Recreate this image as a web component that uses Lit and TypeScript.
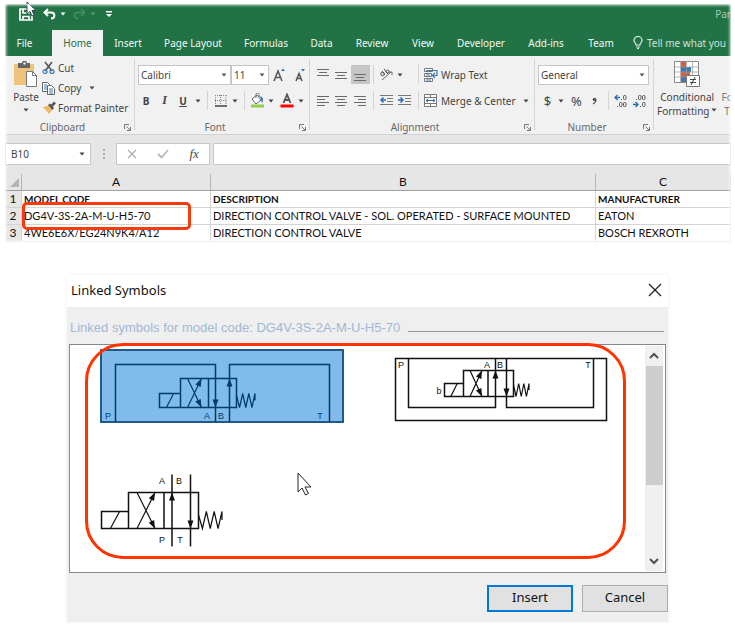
import { LitElement, html, svg, css } from "lit";
import { customElement } from "lit/decorators.js";

const caret = html`<svg class="caret" width="6" height="4" viewBox="0 0 6 4" aria-hidden="true"><path d="M0.5 0.5h5L3 3.5z" fill="currentColor"/></svg>`;

const lines = (rows: number[][], w = 13) => html`<svg width=${w} height="13" viewBox="0 0 ${w} 13" aria-hidden="true">
  ${rows.map(([x1, x2, y]) => svg`<path d="M${x1} ${y + 0.5}H${x2}" stroke="#6a6a6a"/>`)}
</svg>`;

@customElement("excel-window")
export class ExcelWindow extends LitElement {
  static styles = css`
    :host { display: block; position: relative; overflow: hidden; background: #f1f1f1; color: #444; font: 11px/14px "Noto Sans", "Open Sans", sans-serif; }
    :host::after { content: ""; position: absolute; inset: 0; box-shadow: inset 0 0 3px 1px #fff; pointer-events: none; z-index: 3; }
    button { font: inherit; color: inherit; background: none; border: 0; padding: 0; margin: 0; display: flex; align-items: center; justify-content: center; white-space: nowrap; height: 19px; }
    svg { display: block; flex: none; }
    .title { background: #217346; color: #fff; height: 26px; box-sizing: border-box; display: flex; align-items: center; padding: 0 0 6px 14px; gap: 4px; }
    .title button { color: #fff; }
    .title .save { margin-right: 6px; }
    .title .dim { color: #5c9a78; }
    .title .redo { margin: 0 6px 0 3px; gap: 4px; }
    .title .undo { gap: 4px; }
    .doc { margin-left: auto; color: #a6c7b5; font-size: 10px; }
    .tabs { background: #217346; display: grid; grid-template-columns: 47px 51px 50px 80px 66px 45px 56px 46px 70px 60px 50px 1fr; height: 26px; }
    .tabs button { height: 25px; color: #f3f8f5; font-size: 10px; }
    .tabs button:first-child { padding-right: 8px; }
    .tabs .active { height: 26px; background: #f1f1f1; color: #217346; }
    .tabs .tell { color: #cfe2d7; justify-content: flex-start; gap: 4px; padding-left: 7px; }
    .ribbon { display: grid; grid-template-columns: 130px 175px 225px 119px 1fr; height: 78px; border-bottom: 1px solid #d2d2d2; font-size: 10px; }
    .group { display: flex; flex-direction: column; min-width: 0; position: relative; padding: 9px 0 0 3px; gap: 7px; }
    .group::after { content: ""; position: absolute; right: 0; top: 3px; bottom: 4px; border-right: 1px solid #d4d4d4; }
    .foot { display: flex; align-items: center; justify-content: center; height: 14px; padding-right: 18px; color: #666; margin-top: auto; }
    .launch { position: absolute; right: 4px; bottom: 3px; height: 8px; }
    .row { display: grid; height: 19px; align-items: center; justify-items: center; }
    .clip { padding: 2px 0 0 5px; gap: 0; }
    .clipbody { display: grid; grid-template-columns: 32px 1fr; }
    .big { height: auto; flex-direction: column; justify-content: flex-start; line-height: 14px; }
    .big svg:first-child { margin-bottom: 2px; }
    .paste { padding-top: 3px; }
    .paste .caret { margin-top: 4px; }
    .stack { display: grid; grid-auto-rows: 20px; justify-items: start; align-items: center; }
    .stack button { gap: 2px; }
    .stack .caret { margin-left: 6px; }
    .clip .foot { padding-right: 20px; }
    .pick { position: relative; width: 100%; height: 20px; display: block; }
    .pick select { appearance: none; box-sizing: border-box; font: inherit; color: #444; width: 100%; height: 20px; border: 1px solid #c6c6c6; border-radius: 0; background: #fff; padding: 0 2px; margin: 0; }
    .pick .caret { position: absolute; right: 4px; top: 8px; pointer-events: none; color: #555; }
    .f1 { grid-template-columns: 93px 38px 22px 18px; }
    .f2 { grid-template-columns: 16px 21px 16px 14px 5px 22px 6px 12px 15px 12px 19px 10px; }
    .a1 { grid-template-columns: 20px 17px 21px 4px 22px 6px 16px 1fr; }
    .a2 { grid-template-columns: 20px 17px 21px 4px 23px 14px 7px 1fr; }
    .row .wide { justify-self: start; padding-left: 5px; gap: 3px; }
    .wide .caret { margin-left: 4px; }
    .on { background: #c6c6c6; width: 19px; }
    .sep { width: 1px; height: 19px; background: #d4d4d4; }
    .end { justify-self: end; }
    .n1 { grid-template-columns: 111px; justify-content: start; }
    .n2 { grid-template-columns: 19px 8px 23px 12px 9px 23px 15px; }
    .money { font-size: 13px; }
    .b { font-weight: 700; }
    .i { font: italic 700 12px "Liberation Serif", serif; }
    .u { font-weight: 700; text-decoration: underline; }
    .styles { flex-direction: row; gap: 4px; padding: 5px 0 0 3px; }
    .styles::after { display: none; }
    .styles .big { flex: none; }
    .styles .next { padding-top: 29px; color: #777; }
    .inline { display: flex; align-items: center; gap: 2px; }
    .formula { background: #e6e6e6; height: 39px; box-sizing: border-box; padding-top: 8px; display: flex; }
    .box { height: 22px; box-sizing: border-box; border: 1px solid #c8c8c8; background: #fff; display: flex; align-items: center; }
    .name { width: 86px; justify-content: space-between; padding-right: 5px; }
    .name input { width: 60px; border: 0; padding: 0 0 0 5px; font: inherit; font-size: 10px; color: #444; background: none; outline: 0; }
    .dots { width: 25px; display: flex; align-items: center; justify-content: center; height: 22px; }
    .acts { width: 94px; justify-content: space-around; margin-right: 3px; }
    .acts .i { font-weight: 400; font-size: 13px; }
    .bar { flex: 1; min-width: 0; height: 22px; box-sizing: border-box; border: 1px solid #c8c8c8; outline: 0; padding: 0 4px; }
    table { border-collapse: separate; border-spacing: 0; table-layout: fixed; width: 100%; color: #111; font: 11px/16px Lato, "Open Sans", sans-serif; background: #fff; }
    th, td { height: 16px; padding: 0 0 0 2px; text-align: left; white-space: nowrap; border-right: 1px solid #d4d4d4; border-bottom: 1px solid #d4d4d4; }
    thead th { background: #e6e6e6; text-align: center; font-weight: 400; font-size: 12px; border-bottom-color: #a0a0a0; border-right-color: #b4b4b4; padding: 0; }
    tbody th { background: #e6e6e6; text-align: center; font-weight: 400; font-size: 12px; padding: 0; }
    tbody tr:first-child td { font-weight: 700; font-size: 10px; }
    .num { width: 17px; } .ca { width: 189px; } .cb { width: 385px; }
    .corner svg { margin-left: 4px; }
    .sheet { position: relative; }
    .mark { position: absolute; left: 17px; top: 28px; width: 163px; height: 22px; border: 3px solid #fb3a0a; border-radius: 5px; }
  `;

  launch() {
    return html`<button class="launch" aria-label="More options"><svg width="7" height="7" viewBox="0 0 7 7"><path d="M0.5 5V0.5H5M2.5 2.5L6 6M6.5 3v3.5H3" fill="none" stroke="#777"/></svg></button>`;
  }

  render() {
    return html`
      <div class="title">
        <button class="save" aria-label="Save"><svg width="14" height="13" viewBox="0 0 14 13"><path d="M1 1h10l2 2v9H1zM4 1v4h6V1M4 12V8.500h6V12" fill="none" stroke="#fff" stroke-width="1.700"/></svg></button>
        <button class="undo" aria-label="Undo"><svg width="13" height="12" viewBox="0 0 13 12"><path d="M5 1L1.500 4.500 5 8M2 4.500h6c4.500 0 4.500 6 0 6" fill="none" stroke="#fff" stroke-width="2"/></svg>${caret}</button>
        <button class="redo dim" aria-label="Redo"><svg width="13" height="12" viewBox="0 0 13 12"><path d="M8 1l3.500 3.500L8 8M11 4.500H5c-4.500 0-4.500 6 0 6" fill="none" stroke="#4a8c68" stroke-width="1.500"/></svg>${caret}</button>
        <button aria-label="Customize toolbar"><svg width="6" height="7" viewBox="0 0 6 7"><path d="M0 0h6v1.500H0zM0 3h6L3 6z" fill="#fff"/></svg></button>
        <span class="doc">Par</span>
      </div>
      <nav class="tabs">
        <button>File</button><button class="active">Home</button><button>Insert</button><button>Page Layout</button><button>Formulas</button><button>Data</button><button>Review</button><button>View</button><button>Developer</button><button>Add-ins</button><button>Team</button>
        <button class="tell"><svg width="10" height="13" viewBox="0 0 10 13"><path d="M3 9C3 7 1 6.500 1 4.500a4 4 0 0 1 8 0C9 6.500 7 7 7 9zM3 11h4M4 12.500h2" fill="none" stroke="#e3efe8" stroke-width="1.200"/></svg>Tell me what you</button>
      </nav>
      <div class="ribbon">
        <section class="group clip">
          <div class="clipbody">
            <button class="big paste"><svg width="26" height="27" viewBox="0 0 26 27"><path d="M1 3h20v21H1z" fill="#eec47d"/><path d="M5 2h4a2.500 2.500 0 0 1 5 0h3v5H5z" fill="#666"/><circle cx="11.500" cy="2.500" r="1.200" fill="#f1f1f1"/><path d="M13.500 10.500h6l4 4v11h-10z" fill="#fff" stroke="#777"/><path d="M19.500 10.500v4h4" fill="none" stroke="#777"/></svg>Paste${caret}</button>
            <div class="stack">
              <button><svg width="14" height="14" viewBox="3 0 14 14"><path d="M6 1l7 9M13 1L6 10" stroke="#555" stroke-width="1.600"/><circle cx="6" cy="10.500" r="2" fill="none" stroke="#3c78b4" stroke-width="1.200"/><circle cx="13" cy="10.500" r="2" fill="none" stroke="#3c78b4" stroke-width="1.200"/></svg>Cut</button>
              <button><svg width="14" height="14" viewBox="4 0 14 14"><path d="M4.500 1.500h5l2 2v7h-7z" fill="#fff" stroke="#666"/><path d="M6 4h3M6 6h3M6 8h3" stroke="#3c78b4"/><path d="M9.500 4.500h4l3 3v6h-7z" fill="#fff" stroke="#666"/><path d="M11 8h4M11 10h4M11 12h4" stroke="#3c78b4"/></svg>Copy ${caret}</button>
              <button><svg width="14" height="14" viewBox="0 0 14 14"><path d="M1 6l6-1.500 3.500 4L7 13z" fill="#eeb764"/><path d="M6 4l2-1.500L12 7l-1.500 2z" fill="#555"/><path d="M9.500 5L13 1.500" stroke="#555" stroke-width="2.500"/></svg>Format Painter</button>
            </div>
          </div>
          <div class="foot">Clipboard</div>${this.launch()}
        </section>
        <section class="group">
          <div class="row f1">
            <label class="pick"><select aria-label="Font"><option>Calibri</option></select>${caret}</label>
            <label class="pick"><select aria-label="Font size"><option>11</option></select>${caret}</label>
            <button aria-label="Grow font"><svg width="15" height="14" viewBox="0 0 15 14"><path d="M1 13L5 3l4 10M2.500 9.500h5" fill="none" stroke="#555" stroke-width="1.500"/><path d="M8 3l2-2.500L12 3z" fill="#2c6cb0"/></svg></button>
            <button aria-label="Shrink font"><svg width="15" height="14" viewBox="0 0 15 14"><path d="M3 13l3-7.500L9 13M4 10.500h4" fill="none" stroke="#555" stroke-width="1.500"/><path d="M8 1h4l-2 2.500z" fill="#2c6cb0"/></svg></button>
          </div>
          <div class="row f2">
            <button class="b">B</button><button class="i">I</button><button class="u">U</button><button aria-label="Underline styles">${caret}</button><span class="sep"></span>
            <button aria-label="Borders"><svg width="12" height="12" viewBox="0 0 12 12"><path d="M0.500 0v11M5.500 0v11M11 0v11M0 0.500h11M0 5.500h11" stroke="#888" stroke-dasharray="1 1"/><path d="M0 11h12" stroke="#444" stroke-width="1.500"/></svg></button>
            <button aria-label="Border styles">${caret}</button><span class="sep"></span>
            <button aria-label="Fill color"><svg width="15" height="15" viewBox="0 0 15 15"><path d="M2 6l5-4 4 5-5 4zM6 5V1.500a1.500 1.500 0 0 1 3 0V4" fill="#fff" stroke="#666"/><path d="M10 3c3 1 4 4 2 7l-1-3z" fill="#3c78b4"/><path d="M1 11.500h13v3H1z" fill="#8fd14f"/></svg></button>
            <button aria-label="Fill colors">${caret}</button>
            <button aria-label="Font color"><svg width="14" height="15" viewBox="0 0 14 15"><path d="M3.500 10L7 1.500l3.500 8.500M4.500 7h5" fill="none" stroke="#555" stroke-width="1.800"/><path d="M0.500 11.500h13v3h-13z" fill="#f00"/></svg></button>
            <button aria-label="Font colors">${caret}</button>
          </div>
          <div class="foot">Font</div>${this.launch()}
        </section>
        <section class="group">
          <div class="row a1">
            <button aria-label="Top align">${lines([[0, 12, 1], [2, 10, 4], [0, 12, 7]])}</button>
            <button aria-label="Middle align">${lines([[0, 12, 4], [2, 10, 7], [0, 12, 10]])}</button>
            <button class="on" aria-label="Bottom align">${lines([[0, 12, 6], [2, 10, 9], [0, 12, 12]])}</button>
            <span class="sep"></span>
            <button aria-label="Orientation"><svg width="14" height="13" viewBox="0 0 14 13"><circle cx="3.500" cy="6" r="1.800" fill="none" stroke="#555"/><path d="M3 3l3 4M5 1l4 5" stroke="#555"/><circle cx="8.500" cy="3.500" r="1.500" fill="none" stroke="#555"/><path d="M3 12l9-8M9.500 4H13v3" fill="none" stroke="#666"/></svg></button>
            <button aria-label="Orientation choices">${caret}</button><span class="sep end"></span>
            <button class="wide"><svg width="14" height="14" viewBox="0 0 14 14"><path d="M0.500 0.500h8v3h-8zM0.500 5.500h7v3h-7zM0.500 10.500h8v3h-8z" fill="#fff" stroke="#777"/><path d="M2 2.500h9M2 7h4M2 12h5" stroke="#3c78b4"/><path d="M10 2.500h3v5H9M11 5L8.500 7.500 11 10" fill="none" stroke="#3c78b4" stroke-width="1.200"/></svg>Wrap Text</button>
          </div>
          <div class="row a2">
            <button aria-label="Align left">${lines([[0, 12, 2], [0, 8, 5], [0, 12, 8], [0, 8, 11]])}</button>
            <button aria-label="Center">${lines([[0, 12, 2], [2, 10, 5], [0, 12, 8], [2, 10, 11]])}</button>
            <button aria-label="Align right">${lines([[0, 12, 2], [4, 12, 5], [0, 12, 8], [4, 12, 11]])}</button>
            <span class="sep"></span>
            <button aria-label="Decrease indent"><svg width="14" height="13" viewBox="0 0 14 13"><path d="M0 1.500h13M7 4.500h6M7 7.500h6M0 10.500h13" stroke="#777"/><path d="M6 6H1M3.500 3.500L1 6l2.500 2.500" fill="none" stroke="#2c6cb0" stroke-width="1.500"/></svg></button>
            <button aria-label="Increase indent"><svg width="14" height="13" viewBox="0 0 14 13"><path d="M0 1.500h13M7 4.500h6M7 7.500h6M0 10.500h13" stroke="#777"/><path d="M0 6h5M2.500 3.500L5 6 2.500 8.500" fill="none" stroke="#2c6cb0" stroke-width="1.500"/></svg></button>
            <span class="sep end"></span>
            <button class="wide"><svg width="14" height="14" viewBox="0 0 14 14"><path d="M0.500 0.500h12v12h-12zM0.500 3.500h12M0.500 9.500h12M6.500 0.500v3M6.500 9.500v3" fill="#fff" stroke="#777"/><path d="M2 6.500h9M4 5L2 6.500 4 8M9 5l2 1.500L9 8" fill="none" stroke="#2c6cb0"/></svg>Merge &amp; Center ${caret}</button>
          </div>
          <div class="foot">Alignment</div>${this.launch()}
        </section>
        <section class="group">
          <div class="row n1"><label class="pick"><select aria-label="Number format"><option>General</option></select>${caret}</label></div>
          <div class="row n2">
            <button class="money">$</button><button aria-label="Currencies">${caret}</button><button class="money">%</button><button aria-label="Comma style"><svg width="5" height="8" viewBox="0 0 5 8"><circle cx="2.500" cy="2.500" r="1.800" fill="#555"/><path d="M4 2.500C4 5 3 6 1 7" fill="none" stroke="#555" stroke-width="1.200"/></svg></button><span class="sep end"></span>
            <button aria-label="Increase decimal"><svg width="14" height="14" viewBox="0 0 14 14"><path d="M6 3.500H1M3.500 1L1 3.500 3.500 6" fill="none" stroke="#2c6cb0" stroke-width="1.300"/><path d="M3 12.500h1M7 5.500h1" stroke="#555"/><g fill="none" stroke="#555"><rect x="9.500" y="1.500" width="2.500" height="4" rx="1"/><rect x="5.500" y="8.500" width="2.500" height="4" rx="1"/><rect x="9.500" y="8.500" width="2.500" height="4" rx="1"/></g></svg></button>
            <button aria-label="Decrease decimal"><svg width="14" height="14" viewBox="0 0 14 14"><path d="M0 10.500h5M2.500 8L5 10.500 2.500 13" fill="none" stroke="#2c6cb0" stroke-width="1.300"/><path d="M3 5.500h1M7 12.500h1" stroke="#555"/><g fill="none" stroke="#555"><rect x="5.500" y="1.500" width="2.500" height="4" rx="1"/><rect x="9.500" y="1.500" width="2.500" height="4" rx="1"/><rect x="9.500" y="8.500" width="2.500" height="4" rx="1"/></g></svg></button>
          </div>
          <div class="foot">Number</div>${this.launch()}
        </section>
        <section class="group styles">
          <button class="big"><svg width="27" height="27" viewBox="0 0 27 27"><path d="M0.500 0.500h24v21h-24z" fill="#fff" stroke="#888"/><path d="M7 1h5v5H7zM7 11h9v5H7z" fill="#d95f3b"/><path d="M7 6h10v5H7zM7 16h5v5H7z" fill="#3c78b4"/><path d="M0 6h24M0 11h24M0 16h24M6.500 0v21M12.500 0v21M18.500 0v21" stroke="#999" stroke-width="0.700"/><path d="M12.500 14.500h13v11h-13z" fill="#fff" stroke="#777"/><path d="M16 18.500h6M16 21.500h6M17 24l4-8" stroke="#444"/></svg>
            <span>Conditional</span><span class="inline">Formatting ${caret}</span></button>
          <button class="big next"><span>Fo</span><span>T</span></button>
        </section>
      </div>
      <div class="formula">
        <div class="box name"><input aria-label="Name box" value="B10">${caret}</div>
        <div class="dots"><svg width="2" height="11" viewBox="0 0 2 11"><path d="M0 0h2v2H0zM0 4h2v2H0zM0 8h2v2H0z" fill="#aaa"/></svg></div>
        <div class="box acts">
          <button aria-label="Cancel entry"><svg width="10" height="10" viewBox="0 0 10 10"><path d="M1 1l8 8M9 1L1 9" stroke="#b0b0b0" stroke-width="1.300"/></svg></button>
          <button aria-label="Enter"><svg width="12" height="10" viewBox="0 0 12 10"><path d="M1 5l3.500 3.500L11 1" fill="none" stroke="#b8b8b8" stroke-width="1.800"/></svg></button>
          <button class="i" aria-label="Insert function">fx</button>
        </div>
        <input class="bar" aria-label="Formula">
      </div>
      <div class="sheet">
        <table>
          <colgroup><col class="num"><col class="ca"><col class="cb"><col></colgroup>
          <thead><tr><th class="corner"><svg width="11" height="11" viewBox="0 0 11 11"><path d="M10 1v9H1z" fill="#b4b4b4"/></svg></th><th>A</th><th>B</th><th>C</th></tr></thead>
          <tbody>
            <tr><th>1</th><td>MODEL CODE</td><td>DESCRIPTION</td><td>MANUFACTURER</td></tr>
            <tr><th>2</th><td>DG4V-3S-2A-M-U-H5-70</td><td>DIRECTION CONTROL VALVE - SOL. OPERATED - SURFACE MOUNTED</td><td>EATON</td></tr>
            <tr><th>3</th><td>4WE6E6X/EG24N9K4/A12</td><td>DIRECTION CONTROL VALVE</td><td>BOSCH REXROTH</td></tr>
          </tbody>
        </table>
        <div class="mark"></div>
      </div>`;
  }
}

type Valve = { x: number; y: number; w: number; h: number; sol: number; solY: number; c1: number; c2: number; mid: number; spring: number };

const head = (x: number, y: number, angle: number) =>
  svg`<path d="M0 0L-3 8H3z" fill="currentColor" stroke="none" transform="translate(${x} ${y}) rotate(${angle})"/>`;

const valve = (v: Valve) => {
  const b = v.y + v.h;
  const r = v.x + v.w;
  const a = (Math.atan2(v.c2 - v.c1, v.h) * 180) / Math.PI;
  const step = (v.spring - r) / 6;
  const my = (v.solY + b) / 2;
  const zig = [1, 2, 3, 4, 5, 6].map((n) => `L${r + step * n} ${n % 2 ? b : v.solY}`).join("");
  return svg`
    <path d="M${v.x} ${v.y}H${r}V${b}H${v.x}zM${v.mid} ${v.y}V${b}M${v.x} ${v.solY}H${v.sol}V${b}H${v.x}"/>
    <g stroke-width="1.200"><path d="M${v.sol + (v.x - v.sol) * 0.33} ${b}L${v.sol + (v.x - v.sol) * 0.67} ${v.solY}M${v.c1} ${v.y}L${v.c2} ${b}M${v.c1} ${b}L${v.c2} ${v.y}"/>
    <path d="M${r} ${my - 5}${zig}V${my}"/></g>
    ${head(v.c2, v.y, a)}${head(v.c2, b, 180 - a)}`;
};

@customElement("symbols-dialog")
export class SymbolsDialog extends LitElement {
  static styles = css`
    :host { display: block; background: #efefef; color: #111; box-shadow: 0 0 3px 1px #f6f6f6; font: 13px/18px "Noto Sans", "Open Sans", sans-serif; }
    header { background: #fff; height: 32px; box-sizing: border-box; display: flex; align-items: center; justify-content: space-between; padding: 0 6px 3px 4px; }
    h1 { font: inherit; margin: 0; }
    button { font: inherit; color: inherit; margin: 0; padding: 0; border: 0; background: none; }
    svg { display: block; }
    .body { padding: 12px 0 10px 2px; }
    .legend { display: flex; align-items: center; gap: 8px; height: 18px; margin: 0 4px 7px 1px; color: #a1b7d6; font: 13px/18px "Liberation Sans", sans-serif; }
    .legend::after { content: ""; flex: 1; height: 1px; background: #989898; margin-top: 6px; }
    .list { position: relative; margin-right: 2px; height: 227px; border: 1px solid #828790; background: #fff; display: flex; }
    .items { flex: 1; display: grid; grid-template-columns: 294px 1fr; grid-template-rows: 125px 1fr; align-items: start; justify-items: start; padding: 4px 0 0 30px; }
    .picked { background: #80bbeb; color: #003b6e; }
    .items svg { fill: none; stroke: currentColor; stroke-width: 1.500; }
    .items text { font: 9px "Liberation Sans", sans-serif; fill: currentColor; stroke: none; text-anchor: middle; }
    .scroll { width: 18px; margin: 1px 2px 1px 0; background: #f0f0f0; display: flex; flex-direction: column; align-items: center; }
    .scroll button { height: 20px; }
    .thumb { width: 17px; height: 119px; background: #cdcdcd; margin-bottom: auto; }
    .ring { position: absolute; inset: -2px 39px 13px 15px; border: 3px solid #ff3300; border-radius: 38px; pointer-events: none; }
    .pointer { position: absolute; left: 227px; top: 127px; }
    footer { display: flex; justify-content: flex-end; gap: 9px; padding-top: 12px; }
    footer button { width: 86px; height: 27px; box-sizing: border-box; background: #e1e1e1; border: 1px solid #adadad; line-height: 18px; padding-bottom: 4px; }
    footer .primary { border: 2px solid #0078d7; }
  `;

  render() {
    return html`
      <header><h1>Linked Symbols</h1><button aria-label="Close"><svg width="14" height="14" viewBox="0 0 14 14"><path d="M1 1l12 12M13 1L1 13" stroke="#222" stroke-width="1.300"/></svg></button></header>
      <div class="body">
        <div class="legend">Linked symbols for model code: DG4V-3S-2A-M-U-H5-70</div>
        <div class="list">
          <div class="items">
            <button class="picked" aria-label="Subplate valve, ports below"><svg width="244" height="74" viewBox="0 0 244 74">
              <path d="M1 1h242v72H1zM15.500 73V15.500h100V73M129.500 73V15.500h100V73"/>
              ${valve({ x: 80.5, y: 29.5, w: 56, h: 29, sol: 59.5, solY: 44.5, c1: 87.5, c2: 101.5, mid: 108.5, spring: 155 })}
              ${head(115.5, 58.5, 180)}${head(129.5, 29.5, 0)}
              <text x="8" y="70">P</text><text x="107" y="70">A</text><text x="121" y="70">B</text><text x="220" y="70">T</text></svg></button>
            <button aria-label="Subplate valve, ports above"><svg width="214" height="74" viewBox="0 0 214 74">
              <path d="M1.500 9.500h211v62H1.500zM14.500 9.500v49h87v-49M112.500 9.500v49h87v-49"/>
              ${valve({ x: 69.5, y: 21.5, w: 50, h: 26, sol: 50.5, solY: 34.5, c1: 76, c2: 88, mid: 94, spring: 135 })}
              ${head(101.5, 21.5, 0)}${head(112.5, 47.5, 180)}
              <text x="7" y="19">P</text><text x="93" y="19">A</text><text x="106" y="19">B</text><text x="194" y="19">T</text><text x="45" y="45">b</text></svg></button>
            <button aria-label="Directional valve"><svg width="124" height="74" viewBox="0 0 124 74">
              <path d="M72 0.500v72M90.500 0.500v72"/>
              ${valve({ x: 28.5, y: 18.5, w: 70, h: 36, sol: 1.5, solY: 37.5, c1: 37, c2: 55, mid: 64, spring: 122 })}
              ${head(72, 18.5, 0)}${head(90.5, 54.5, 180)}
              <text x="62" y="10">A</text><text x="79" y="10">B</text><text x="62" y="69">P</text><text x="80" y="69">T</text></svg></button>
          </div>
          <div class="scroll">
            <button aria-label="Scroll up"><svg width="10" height="8" viewBox="0 0 10 8"><path d="M1 6l4-4 4 4" fill="none" stroke="#505050" stroke-width="2"/></svg></button>
            <div class="thumb"></div>
            <button aria-label="Scroll down"><svg width="10" height="8" viewBox="0 0 10 8"><path d="M1 2l4 4 4-4" fill="none" stroke="#505050" stroke-width="2"/></svg></button>
          </div>
          <div class="ring"></div>
          <svg class="pointer" width="16" height="24" viewBox="0 0 16 24"><path d="M1 1v19l4-4 3.500 7 3-1.500L8 15h6z" fill="#fff" stroke="#223"/></svg>
        </div>
        <footer><button class="primary">Insert</button><button>Cancel</button></footer>
      </div>`;
  }
}

@customElement("app-root")
export class AppRoot extends LitElement {
  static styles = css`
    :host { display: block; position: relative; background: #fff; padding: 4px 0 5px; overflow: hidden; }
    excel-window { margin: 0 4px 33px 5px; }
    symbols-dialog { margin: 0 67px; }
    .pointer { position: absolute; left: 26px; top: 1px; }
  `;

  render() {
    return html`
      <excel-window></excel-window>
      <symbols-dialog></symbols-dialog>
      <svg class="pointer" width="11" height="16" viewBox="0 0 11 16"><path d="M1 1v12l3-2.500L6 15l2-1-2-4.500h4z" fill="#fff" stroke="#345"/></svg>`;
  }
}
